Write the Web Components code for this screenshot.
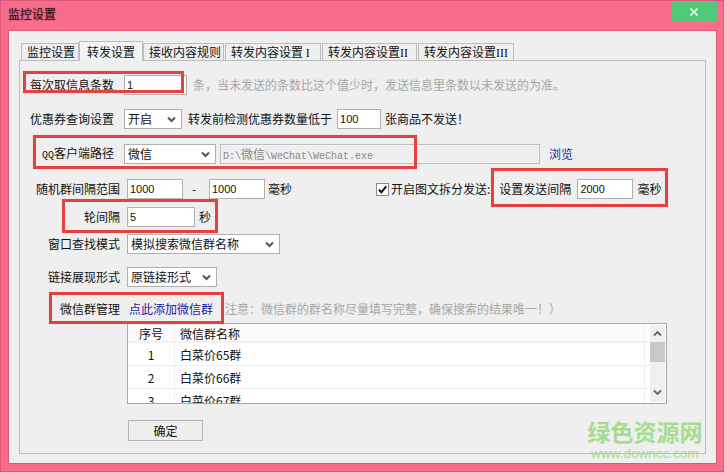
<!DOCTYPE html>
<html lang="zh"><head><meta charset="utf-8"><title>监控设置</title>
<style>
html,body{margin:0;padding:0;background:#f96d8b}
body{width:724px;height:472px;overflow:hidden;font:12px/16px "Noto Sans CJK SC","Liberation Sans",sans-serif;color:#111;position:relative}
.r1{margin-top:14px}.r2{margin-top:14px}.r3{margin-top:15px}.r4{margin-top:15px}.r5{margin-top:8px}.r6{margin-top:7px}.r7{margin-top:13px}.r8{margin-top:12px}
.gray{color:#a6a6a6}.dash{width:26px;box-sizing:border-box;padding-right:4px;text-align:center}.link{color:#1c1ca0}.browse{color:#1c2a9c;margin-left:9px}
.l94{--lw:94px;--lg:10px}.l100{--lw:100px;--lg:7px}
.ml3{margin-left:3px}.ml4{margin-left:4px}.ml6{margin-left:6px}
.rom{font-family:"Liberation Serif",serif}
.qq{font:10px/16px "Liberation Mono",monospace}
.cj{font:12px/18px "Noto Sans CJK SC",sans-serif}
data-list{margin:4px 0 0 107px}
push-button{margin:16px 0 0 108px}
</style></head><body>

<template id="t-window"><style>
:host{display:block;width:724px;height:472px;box-sizing:border-box;padding:30px 7px 8px 8px;background:#f96d8b;box-shadow:inset 0 0 0 1px #d9587c;position:relative}
.title{position:absolute;left:8px;top:6px;font-size:12px;line-height:16px;color:#2a1015;text-shadow:0 0 2px #8a3a4c}
.close{position:absolute;right:7px;top:2px;width:46px;height:19px;background:#50c878;display:flex;align-items:center;justify-content:center}
.client{height:100%;box-sizing:border-box;background:#efefef;border:1px solid #d9587c;padding:11px 10px 9px 10px;display:flex;flex-direction:column}
</style><div class="title"><slot name="title"></slot></div>
<div class="close"><svg width="10" height="10" viewBox="0 0 10 10"><path d="M1.5 1.5l7 7M8.5 1.5l-7 7" stroke="#fff" stroke-width="1.6" fill="none"/></svg></div>
<div class="client"><slot></slot></div></template>

<template id="t-tabs"><style>
:host{display:flex;align-items:flex-end;height:18px;padding-left:2px;position:relative;z-index:1}
</style><slot></slot></template>

<template id="t-tab"><style>
:host{display:block;flex:none;box-sizing:border-box;height:17px;margin-right:1px;padding:0 0 0 5px;border:1px solid #bdbdbd;border-bottom:0;background:#efefef;line-height:16px;white-space:nowrap;font-size:12px}
:host([active]){height:20px;margin:0 0 -1px -1px;padding:1px 0 0 7px;background:#f3f3f3;line-height:18px}
</style><slot></slot></template>

<template id="t-panel"><style>
:host{display:block;flex:1;box-sizing:border-box;border:1px solid #bdbdbd;padding:0}
</style><slot></slot></template>

<template id="t-row"><style>
:host{display:flex;align-items:center;height:20px;white-space:nowrap;font-size:12px}
.lab{width:var(--lw,100px);margin-right:var(--lg,7px);text-align:right;flex:none}
</style><span class="lab"><slot name="label"></slot></span><slot></slot></template>

<template id="t-box"><style>
:host{display:block;flex:none;box-sizing:border-box;height:20px;border:1px solid #b0b0b0;background:#fff;padding:0 2px;font:11px/18px "Liberation Sans",sans-serif;color:#111}
:host([disabled]){background:#efefef;border-color:#bdbdbd;box-shadow:inset 0 0 0 1px #f6f6f6;font:10px/18px "Liberation Mono","Noto Sans CJK SC",monospace;color:#8a8a8a;padding-left:2px}
</style><slot></slot></template>

<template id="t-select"><style>
:host{display:flex;flex:none;align-items:center;justify-content:space-between;box-sizing:border-box;height:20px;border:1px solid #b0b0b0;background:#fff;padding:0 5px 0 3px;font-size:12px;color:#111}
svg{display:block}
</style><span><slot></slot></span><svg width="9" height="7" viewBox="0 0 9 7"><path d="M1 1.5l3.5 3.5L8 1.5" stroke="#555" stroke-width="2" fill="none"/></svg></template>

<template id="t-check"><style>
:host{display:flex;flex:none;align-items:center;gap:2px;margin-left:84px;font-size:12px}
.b{width:11px;height:11px;border:1px solid #8a8a8a;background:#fff;display:block}
svg{display:block}
</style><span class="b"><svg width="11" height="11" viewBox="0 0 11 11"><path d="M1.8 5.5l2.6 2.8 4.8-6" stroke="#111" stroke-width="2" fill="none"/></svg></span><span><slot></slot></span></template>

<template id="t-list"><style>
:host{display:block;width:540px;height:81px;box-sizing:border-box;border:1px solid #a8a8a8;background:#fff;position:relative;overflow:hidden;font-size:12px}
.rows{width:521px;height:79px;overflow:hidden}
.s{position:absolute;top:1px;right:1px;bottom:1px;width:15px;background:#f0f0f0;display:flex;flex-direction:column;align-items:center;justify-content:space-between;padding:5px 0 6px;box-sizing:border-box}
.th{position:absolute;top:17px;left:0;width:15px;height:20px;background:#c8c8c8}
.gut{position:absolute;left:516px;top:0;bottom:0;width:1px;background:#f5eef0}
</style><div class="rows"><slot></slot></div><div class="gut"></div>
<div class="s"><svg width="9" height="7" viewBox="0 0 9 7"><path d="M1 5.5L4.5 2 8 5.5" stroke="#666" stroke-width="1.8" fill="none"/></svg><div class="th"></div><svg width="9" height="7" viewBox="0 0 9 7"><path d="M1 1.5L4.5 5 8 1.5" stroke="#666" stroke-width="1.8" fill="none"/></svg></div></template>

<template id="t-listrow"><style>
:host{display:flex;height:23px;box-sizing:border-box;border-bottom:1px solid #eee;line-height:24px}
:host([head]){height:19px;background:#fbfbfb;border-bottom:2px solid #f7eef0;line-height:19px}
.n{width:46px;text-align:center;border-right:1px solid #f0f0f0;flex:none}
:host([head]) .n{border-right-color:#f7eef0}
.t{padding-left:5px}
</style><span class="n"><slot name="n"></slot></span><span class="t"><slot></slot></span></template>

<template id="t-btn"><style>
:host{display:block;width:75px;height:21px;box-sizing:border-box;border:1px solid #b4b4b4;background:#efefef;text-align:center;line-height:19px;font-size:12px}
</style><slot></slot></template>

<template id="t-mark"><style>
:host{position:absolute;display:block;box-sizing:border-box;border:3px solid #e44141;left:var(--x);top:var(--y);width:var(--w);height:var(--h);pointer-events:none;z-index:3;box-shadow:0 0 1px #f9c0c0}
</style></template>

<template id="t-wm"><style>
:host{position:absolute;left:587px;top:418px;display:block;width:116px;text-align:center;z-index:4;color:#a6dc8e}
.a{font:700 23px/27px "Noto Sans CJK SC",sans-serif;white-space:nowrap}
.b{font:13.5px/15px "Liberation Sans",sans-serif;margin-top:1px;white-space:nowrap}
</style><div class="a"><slot name="cn"></slot></div><div class="b"><slot name="url"></slot></div></template>

<x-window>
 <span slot="title">监控设置</span>
 <x-tabs><x-tab style="width:58px">监控设置</x-tab><x-tab active style="width:64px">转发设置</x-tab><x-tab style="width:81px">接收内容规则</x-tab><x-tab style="width:96px">转发内容设置 <span class="rom">I</span></x-tab><x-tab style="width:95px">转发内容设置<span class="rom">II</span></x-tab><x-tab style="width:96px">转发内容设置<span class="rom">III</span></x-tab></x-tabs>
 <x-panel>
  <x-row class="r1 l94"><span slot="label">每次取信息条数</span><x-box style="width:63px">1</x-box><span class="gray ml6">条，当未发送的条数比这个值少时，发送信息里条数以未发送的为准。</span></x-row>
  <x-row class="r2 l94"><span slot="label">优惠券查询设置</span><x-select style="width:58px">开启</x-select><span class="ml6">转发前检测优惠券数量低于</span><x-box style="width:44px;margin-left:5px">100</x-box><span class="ml4">张商品不发送！</span></x-row>
  <x-row class="r3 l94"><span slot="label"><span class="qq">QQ</span>客户端路径</span><x-select style="width:92px">微信</x-select><x-box disabled style="width:320px;margin-left:4px">D:\<span class="cj">微信</span>\WeChat\WeChat.exe</x-box><span class="browse">浏览</span></x-row>
  <x-row class="r4 l100"><span slot="label">随机群间隔范围</span><x-box style="width:56px">1000</x-box><span class="dash">-</span><x-box style="width:56px">1000</x-box><span class="ml3">毫秒</span><x-check>开启图文拆分发送:</x-check><span style="margin-left:9px">设置发送间隔</span><x-box style="width:56px;margin-left:6px">2000</x-box><span class="ml4">毫秒</span></x-row>
  <x-row class="r5 l100"><span slot="label">轮间隔</span><x-box style="width:68px">5</x-box><span class="ml4">秒</span></x-row>
  <x-row class="r6 l100"><span slot="label">窗口查找模式</span><x-select style="width:153px">模拟搜索微信群名称</x-select></x-row>
  <x-row class="r7 l100"><span slot="label">链接展现形式</span><x-select style="width:90px">原链接形式</x-select></x-row>
  <x-row class="r8 l100"><span slot="label">微信群管理</span><span class="link" style="margin-left:2px">点此添加微信群</span><span class="gray">（注意：微信群的群名称尽量填写完整，确保搜索的结果唯一！）</span></x-row>
  <data-list>
   <list-row head><span slot="n">序号</span>微信群名称</list-row>
   <list-row><span slot="n">1</span>白菜价65群</list-row>
   <list-row><span slot="n">2</span>白菜价66群</list-row>
   <list-row><span slot="n">3</span>白菜价67群</list-row>
  </data-list>
  <push-button>确定</push-button>
 </x-panel>
</x-window>
<red-mark style="--x:23px;--y:71px;--w:161px;--h:22px"></red-mark>
<red-mark style="--x:33px;--y:135px;--w:384px;--h:34px"></red-mark>
<red-mark style="--x:491px;--y:168px;--w:177px;--h:39px"></red-mark>
<red-mark style="--x:62px;--y:199px;--w:156px;--h:34px"></red-mark>
<red-mark style="--x:49px;--y:292px;--w:175px;--h:32px"></red-mark>
<water-mark><span slot="cn">绿色资源网</span><span slot="url">www.downcc.com</span></water-mark>

<script>
const map={'x-window':'t-window','x-tabs':'t-tabs','x-tab':'t-tab','x-panel':'t-panel','x-row':'t-row','x-box':'t-box','x-select':'t-select','x-check':'t-check','data-list':'t-list','list-row':'t-listrow','push-button':'t-btn','red-mark':'t-mark','water-mark':'t-wm'};
for(const [name,id] of Object.entries(map)){
  customElements.define(name,class extends HTMLElement{
    constructor(){super();this.attachShadow({mode:'open'}).appendChild(document.getElementById(id).content.cloneNode(true));}
  });
}
</script>
</body></html>
